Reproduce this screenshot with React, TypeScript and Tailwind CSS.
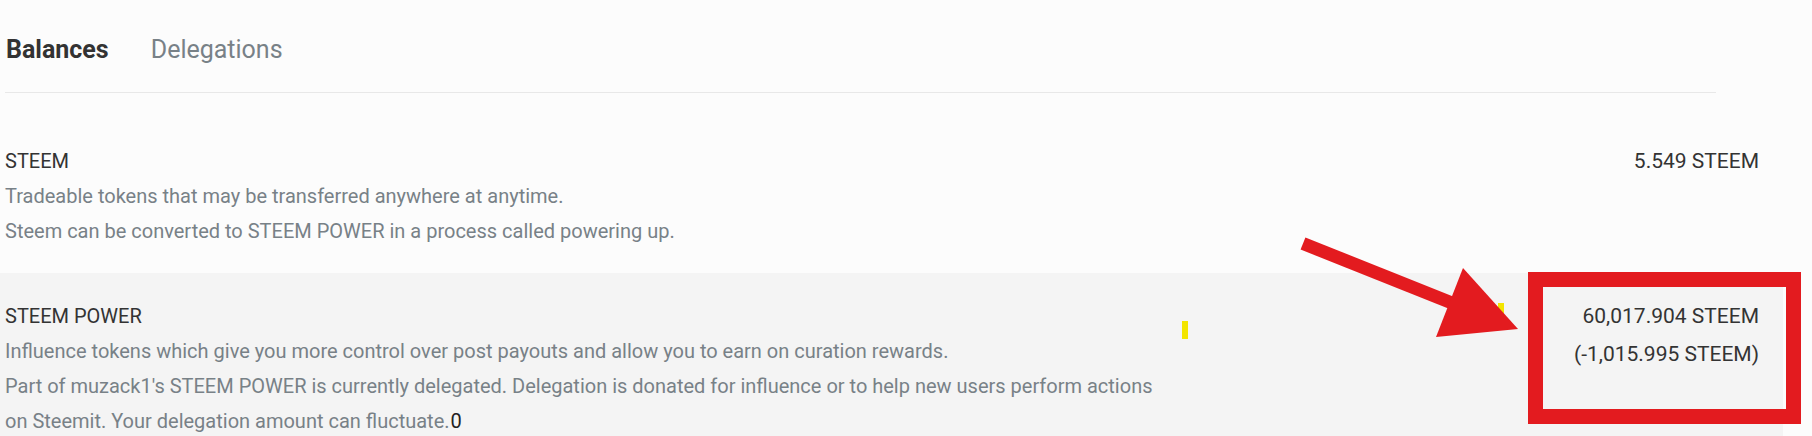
import React from "react";

export default function App() {
  return (
    <div className="relative h-[436px] w-full overflow-hidden bg-[#fcfcfc] font-['Roboto',sans-serif]">
      {/* Tabs */}
      <div className="ml-[5px] flex w-[1711px] gap-[42px] border-b border-[#e8e8e8] pb-[30px] pl-[1px] pt-[37px] text-[25px] leading-[25px]">
        <span className="font-bold text-[#333333]">Balances</span>
        <span className="text-[#788187]">Delegations</span>
      </div>

      {/* Balances table */}
      <div className="mt-[25px] w-[1783px] text-[20px] leading-[35px]">
        <div className="flex pb-[24px] pl-[5px] pr-[24px] pt-[26px]">
          <div className="w-[1165px]">
            <div className="text-[#333333]">STEEM</div>
            <div className="text-[#788187]">Tradeable tokens that may be transferred anywhere at anytime.</div>
            <div className="text-[#788187]">Steem can be converted to STEEM POWER in a process called powering up.</div>
          </div>
          <div className="ml-auto text-right text-[21px] text-[#333333]">
            <div>5.549 STEEM</div>
          </div>
        </div>
        <div className="flex bg-[#f4f4f4] pb-[24px] pl-[5px] pr-[24px] pt-[26px]">
          <div className="w-[1165px]">
            <div className="text-[#333333]">STEEM POWER</div>
            <div className="text-[#788187]">
              Influence tokens which give you more control over post payouts and allow you to earn on curation rewards.
            </div>
            <div className="text-[#788187]">
              Part of muzack1's STEEM POWER is currently delegated. Delegation is donated for influence or to help new users perform actions on Steemit. Your delegation amount can fluctuate.<span className="pl-[1px] text-[#222222]">0</span>
            </div>
          </div>
          <div className="ml-auto text-right text-[21px] text-[#333333]">
            <div>60,017.904 STEEM</div>
            <div className="mt-[3px]">(-1,015.995 STEEM)</div>
          </div>
        </div>
      </div>

      {/* Yellow marks */}
      <div className="absolute left-[1182px] top-[321px] h-[18px] w-[6px] bg-[#f3e500]" />
      <div className="absolute left-[1498px] top-[303px] h-[18px] w-[6px] bg-[#f3e500]" />

      {/* Red annotation box */}
      <div className="absolute left-[1528px] top-[272px] h-[152px] w-[273px] border-[15px] border-[#e31b1f]" />

      {/* Red arrow */}
      <svg className="pointer-events-none absolute left-0 top-0" width="1812" height="436" viewBox="0 0 1812 436">
        <line x1="1303" y1="243.5" x2="1462" y2="307" stroke="#e31b1f" strokeWidth="13" />
        <polygon points="1463,268 1518,329 1436,337" fill="#e31b1f" />
      </svg>
    </div>
  );
}
